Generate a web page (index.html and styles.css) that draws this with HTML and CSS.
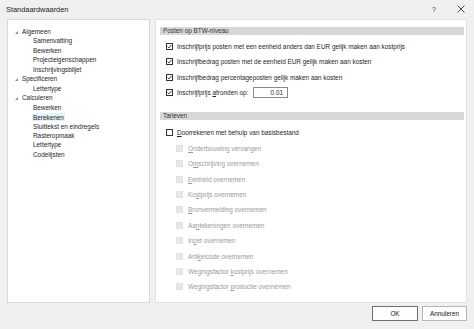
FILE: index.html
```html
<!DOCTYPE html>
<html lang="nl">
<head>
<meta charset="utf-8">
<title>Standaardwaarden</title>
<link rel="stylesheet" href="styles.css">
</head>
<body>
<div class="window">
  <div class="titlebar">
    <span class="title">Standaardwaarden</span>
    <span class="help">?</span>
    <span class="close"><svg width="8" height="8" viewBox="0 0 8 8"><path d="M0.5 0.5 L7.5 7.5 M7.5 0.5 L0.5 7.5" stroke="#222" stroke-width="0.8" fill="none"/></svg></span>
  </div>
  <div class="main">
    <div class="tree">
      <div class="node l1"><span class="exp"></span>Algemeen</div>
      <div class="node l2">Samenvatting</div>
      <div class="node l2">Bewerken</div>
      <div class="node l2">Projecteigenschappen</div>
      <div class="node l2">Inschrijvingsbiljet</div>
      <div class="node l1"><span class="exp"></span>Specificeren</div>
      <div class="node l2">Lettertype</div>
      <div class="node l1"><span class="exp"></span>Calculeren</div>
      <div class="node l2">Bewerken</div>
      <div class="node l2"><span class="sel">Berekenen</span></div>
      <div class="node l2">Sluittekst en eindregels</div>
      <div class="node l2">Rasteropmaak</div>
      <div class="node l2">Lettertype</div>
      <div class="node l2">Codelijsten</div>
    </div>
    <div class="content">
      <div class="bar">Posten op BTW-niveau</div>
      <div class="group top">
        <div class="row"><span class="cb checked"><svg width="5" height="5" viewBox="0 0 5 5"><path d="M0.6 2.6 L1.9 3.9 L4.4 0.9" stroke="#222" stroke-width="0.9" fill="none"/></svg></span><span class="lbl">Inschrijfprijs posten met een eenheid anders dan EUR gelijk maken aan kostprijs</span></div>
        <div class="row"><span class="cb checked"><svg width="5" height="5" viewBox="0 0 5 5"><path d="M0.6 2.6 L1.9 3.9 L4.4 0.9" stroke="#222" stroke-width="0.9" fill="none"/></svg></span><span class="lbl">Inschrijfbedrag posten met de eenheid EUR gelijk maken aan kosten</span></div>
        <div class="row"><span class="cb checked"><svg width="5" height="5" viewBox="0 0 5 5"><path d="M0.6 2.6 L1.9 3.9 L4.4 0.9" stroke="#222" stroke-width="0.9" fill="none"/></svg></span><span class="lbl">Inschrijfbedrag percentageposten gelijk maken aan kosten</span></div>
        <div class="row"><span class="cb checked"><svg width="5" height="5" viewBox="0 0 5 5"><path d="M0.6 2.6 L1.9 3.9 L4.4 0.9" stroke="#222" stroke-width="0.9" fill="none"/></svg></span><span class="lbl fixed">Inschrijfprijs <u>a</u>fronden op:</span><span class="input">0.01</span></div>
      </div>
      <div class="bar second">Tarieven</div>
      <div class="group bottom">
        <div class="row"><span class="cb"></span><span class="lbl"><u>D</u>oorrekenen met behulp van basisbestand</span></div>
        <div class="row sub"><span class="cb dis"></span><span class="lbl dis"><u>O</u>nderbouwing vervangen</span></div>
        <div class="row sub"><span class="cb dis"></span><span class="lbl dis">O<u>m</u>schrijving overnemen</span></div>
        <div class="row sub"><span class="cb dis"></span><span class="lbl dis"><u>E</u>enheid overnemen</span></div>
        <div class="row sub"><span class="cb dis"></span><span class="lbl dis">Ko<u>s</u>tprijs overnemen</span></div>
        <div class="row sub"><span class="cb dis"></span><span class="lbl dis"><u>B</u>ronvermelding overnemen</span></div>
        <div class="row sub"><span class="cb dis"></span><span class="lbl dis">Aa<u>n</u>tekeningen overnemen</span></div>
        <div class="row sub"><span class="cb dis"></span><span class="lbl dis">In<u>z</u>et overnemen</span></div>
        <div class="row sub"><span class="cb dis"></span><span class="lbl dis">Arti<u>k</u>elcode overnemen</span></div>
        <div class="row sub"><span class="cb dis"></span><span class="lbl dis">Wegingsfactor <u>k</u>ostprijs overnemen</span></div>
        <div class="row sub"><span class="cb dis"></span><span class="lbl dis">Wegingsfactor <u>p</u>roductie overnemen</span></div>
      </div>
    </div>
  </div>
  <div class="footer">
    <button class="btn default">OK</button>
    <button class="btn">Annuleren</button>
  </div>
</div>
</body>
</html>
```
FILE: styles.css
```css
html, body {
  margin: 0;
  padding: 0;
}
body {
  width: 474px;
  height: 329px;
  overflow: hidden;
  background: #f0f0f0;
  font-family: "Liberation Sans", Arial, sans-serif;
  font-size: 6.4px;
  color: #1e1e1e;
}
.window {
  width: 474px;
  height: 329px;
  display: flex;
  flex-direction: column;
  background: #f0f0f0;
}
.titlebar {
  height: 19px;
  display: flex;
  align-items: center;
  padding: 0 9px 0 6px;
  box-sizing: border-box;
}
.title {
  font-size: 7.4px;
  color: #222;
  flex: 1;
  margin-top: -1px;
}
.help {
  font-size: 7px;
  color: #333;
  margin-right: 21px;
  margin-top: -1px;
}
.close {
  display: flex;
  margin-top: -1px;
}
.main {
  height: 284px;
  display: flex;
  gap: 5px;
  padding: 0 7px;
}
.tree {
  width: 143px;
  box-sizing: border-box;
  background: #fff;
  border: 1px solid #d9d9d9;
  padding-top: 7px;
}
.node {
  height: 9.46px;
  line-height: 9.46px;
  white-space: nowrap;
}
.node.l1 {
  padding-left: 14px;
}
.node.l2 {
  padding-left: 25px;
}
.exp {
  display: inline-block;
  width: 0;
  height: 0;
  border-left: 3px solid transparent;
  border-bottom: 3px solid #8a8a8a;
  margin-left: -7px;
  margin-right: 4px;
  vertical-align: 0;
}
.sel {
  background: #e5f3fb;
  padding: 0.5px 1px;
  margin-left: -1px;
}
.content {
  width: 312px;
  box-sizing: border-box;
  background: #fff;
  border: 1px solid #e2e2e2;
  padding: 7px 2px 0 4px;
}
.bar {
  height: 8px;
  line-height: 8px;
  background: #d7d7d7;
  padding-left: 3px;
  color: #333;
}
.bar.second {
  margin-top: 11.75px;
}
.group.top {
  margin-top: 3.25px;
}
.group.bottom {
  margin-top: 5.3px;
}
.row {
  display: flex;
  align-items: center;
  height: 15.5px;
  padding-left: 6px;
  white-space: nowrap;
}
.group.bottom .row {
  height: 15.4px;
}
.row.sub {
  padding-left: 16px;
}
.cb {
  width: 7px;
  height: 7px;
  box-sizing: border-box;
  border: 1px solid #333;
  background: #fff;
  display: flex;
  align-items: center;
  justify-content: center;
  flex: none;
  margin-right: 4px;
}
.cb.dis {
  border-color: #e3e3e3;
  background: #e8e8e8;
  margin-right: 5px;
}
.lbl.dis {
  color: #9a9a9a;
}
.lbl.fixed {
  display: inline-block;
  width: 76px;
}
.input {
  width: 35px;
  height: 11px;
  box-sizing: border-box;
  border: 1px solid #8a8a8a;
  background: #fff;
  text-align: right;
  padding-right: 4px;
  line-height: 9px;
}
u {
  text-decoration: underline;
  text-underline-offset: 1px;
}
.footer {
  flex: 1;
  display: flex;
  justify-content: flex-end;
  align-items: flex-start;
  gap: 4px;
  padding: 3px 7px 0 0;
}
.btn {
  width: 45px;
  height: 15px;
  margin: 0;
  padding: 0;
  font-family: "Liberation Sans", Arial, sans-serif;
  font-size: 6.4px;
  color: #222;
  background: #fdfdfd;
  border: 1px solid #b5b5b5;
  border-radius: 0;
}
.btn.default {
  width: 46px;
  border-color: #6f6f6f;
}
```
